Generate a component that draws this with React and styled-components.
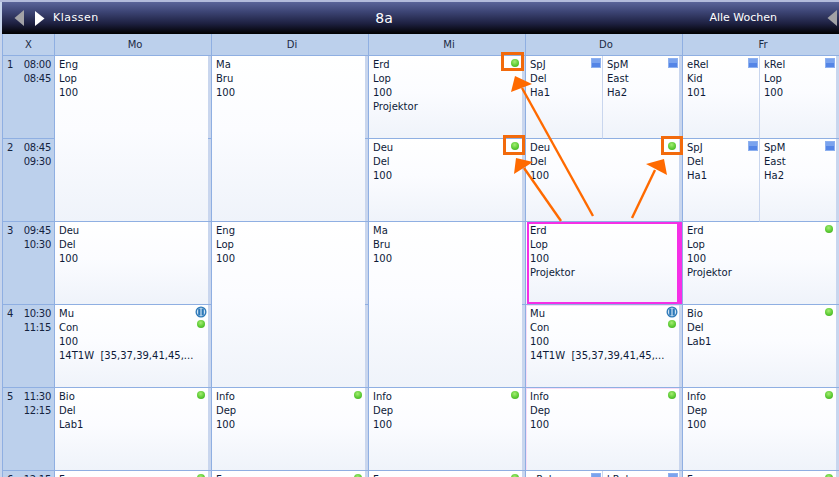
import React from 'react';
import styled, { createGlobalStyle } from 'styled-components';

const LINE = '#8fafe2';
const HEAD = '#bcd0ec';

const Global = createGlobalStyle`
  html, body { margin: 0; padding: 0; background: #fff; }
`;

const Page = styled.div`
  position: relative;
  width: 839px;
  height: 477px;
  overflow: hidden;
  box-sizing: border-box;
  padding: 2px 0 0 2px;
  background: linear-gradient(#b3bbdb 0 2px, #c8d5ec 2px);
  font-family: "DejaVu Sans", Tahoma, sans-serif;
  font-size: 10px;
  line-height: 14px;
  color: #0d1a38;
`;

const TopBar = styled.div`
  width: 840px;
  height: 32px;
  display: grid;
  grid-template-columns: 312px 140px 1fr;
  align-items: center;
  background: linear-gradient(#5a6499 0, #3d4575 30%, #1d2040 68%, #000 100%);
  color: #fff;
`;

const BarLeft = styled.div`
  display: flex;
  align-items: center;
  padding-left: 12px;
`;

const BarLabel = styled.span`
  font-size: 11px;
  letter-spacing: ${({ $spaced }) => ($spaced ? '0.5px' : '0')};
`;

const BarTitle = styled.div`
  text-align: center;
  font-size: 14px;
`;

const BarRight = styled.div`
  display: flex;
  align-items: center;
  justify-content: flex-end;
  padding-right: 4px;
  gap: 50px;
`;

const Arrow = styled.svg`
  display: block;
  flex: none;
  width: 11px;
  height: 17px;
  margin-right: ${({ $after }) => $after || 0}px;
`;

const HeadRow = styled.div`
  display: flex;
  height: 22px;
`;

const HeadCell = styled.div`
  flex: none;
  box-sizing: border-box;
  width: ${({ $w }) => $w}px;
  padding-left: ${({ $w }) => ($w > 100 ? 4 : 0)}px;
  background: ${HEAD};
  border-right: 1px solid ${LINE};
  border-bottom: 1px solid ${LINE};
  border-left: ${({ $first }) => ($first ? `1px solid ${LINE}` : '0')};
  text-align: center;
  line-height: 21px;
  color: #1b2a44;
`;

const Body = styled.div`
  display: flex;
`;

const TimeColumn = styled.div`
  flex: none;
  width: 53px;
  box-sizing: border-box;
  background: ${HEAD};
  border-left: 1px solid ${LINE};
  border-right: 1px solid ${LINE};
`;

const TimeRow = styled.div`
  box-sizing: border-box;
  height: 83px;
  display: flex;
  justify-content: space-between;
  padding: 2px 3px 0 4px;
  border-bottom: 1px solid ${LINE};
  color: #14233f;
`;

const Times = styled.div`
  text-align: right;
  letter-spacing: -0.3px;
`;

const DayColumn = styled.div`
  flex: none;
  width: 157px;
  box-sizing: border-box;
  border-right: 1px solid ${LINE};
`;

const Slot = styled.div`
  position: relative;
  display: flex;
  height: ${({ $span }) => $span * 83}px;
`;

const Strip = styled.div`
  flex: none;
  width: 3px;
  background: repeating-linear-gradient(
    ${({ $selected }) => ($selected ? '#f52fe6' : '#c9d6ee')} 0 82px,
    ${LINE} 82px 83px
  );
`;

const Lesson = styled.div`
  position: relative;
  flex: 1;
  min-width: 0;
  box-sizing: border-box;
  padding: 2px 0 0 4px;
  white-space: pre;
  background: linear-gradient(#fff, #fbfcff 45%, #eff3fa);
  border-bottom: 1px solid ${LINE};
  border-left: ${({ $split }) => ($split ? '1px solid #c9d6ee' : '0')};
  box-shadow: ${({ $tinted }) => ($tinted ? 'inset 1px 1px 0 #f8dcf6' : 'none')};
`;

const SelectionBox = styled.div`
  position: absolute;
  top: 0;
  left: 1px;
  right: 0;
  bottom: 0;
  border: 2px solid #f52fe6;
`;

const Dot = styled.span`
  position: absolute;
  top: ${({ $low }) => ($low ? 15 : 3)}px;
  right: 3px;
  width: 8px;
  height: 8px;
  border-radius: 50%;
  background: radial-gradient(circle at 45% 35%, #a4ec72 0, #5ccb34 55%, #3a9f1c 100%);
`;

const Square = styled.span`
  position: absolute;
  top: 2px;
  right: 1px;
  width: 10px;
  height: 10px;
  box-sizing: border-box;
  border: 1px solid #8db0ef;
  background: linear-gradient(#7aa3ee 0 45%, #5485e6 45%);
`;

const PauseIcon = styled.svg`
  position: absolute;
  top: 1px;
  right: 1px;
  width: 12px;
  height: 12px;
`;

const Marker = styled.rect`
  fill: none;
  stroke: #f26a0c;
  stroke-width: 3;
`;

const Overlay = styled.svg`
  position: absolute;
  top: 0;
  left: 0;
  width: 839px;
  height: 477px;
  pointer-events: none;
`;

const Pause = () => (
  <PauseIcon viewBox="0 0 12 12">
    <circle cx="6" cy="6" r="5.5" fill="#2c78b8" />
    <circle cx="6" cy="6" r="4.2" fill="#cfe3f4" />
    <rect x="3.2" y="2.5" width="2.2" height="7" fill="#2c78b8" />
    <rect x="6.6" y="2.5" width="2.2" height="7" fill="#2c78b8" />
  </PauseIcon>
);

const periods = [
  ['1', '08:00', '08:45'],
  ['2', '08:45', '09:30'],
  ['3', '09:45', '10:30'],
  ['4', '10:30', '11:15'],
  ['5', '11:30', '12:15'],
  ['6', '12:15', '13:00'],
];

const erd = 'Erd\nLop\n100\nProjektor';
const mu = 'Mu\nCon\n100\n14T1W  [35,37,39,41,45,...';
const info = 'Info\nDep\n100';
const bio = 'Bio\nDel\nLab1';
const fra = 'Fra\nDel\n100';

const days = [
  {
    name: 'Mo',
    slots: [
      { text: 'Eng\nLop\n100', span: 2 },
      { text: 'Deu\nDel\n100' },
      { text: mu, pause: true },
      { text: bio, dot: true },
      { text: fra, dot: true },
    ],
  },
  {
    name: 'Di',
    slots: [
      { text: 'Ma\nBru\n100', span: 2 },
      { text: 'Eng\nLop\n100', span: 2 },
      { text: info, dot: true },
      { text: fra, dot: true },
    ],
  },
  {
    name: 'Mi',
    slots: [
      { text: erd, dot: true },
      { text: 'Deu\nDel\n100', dot: true },
      { text: 'Ma\nBru\n100', span: 2 },
      { text: info, dot: true },
      { text: fra, dot: true },
    ],
  },
  {
    name: 'Do',
    slots: [
      { split: ['SpJ\nDel\nHa1', 'SpM\nEast\nHa2'] },
      { text: 'Deu\nDel\n100', dot: true },
      { text: erd, selected: true },
      { text: mu, pause: true, tinted: true },
      { text: info, dot: true, tinted: true },
      { split: ['eRel\nKid\n101', 'kRel\nLop\n100'] },
    ],
  },
  {
    name: 'Fr',
    slots: [
      { split: ['eRel\nKid\n101', 'kRel\nLop\n100'] },
      { split: ['SpJ\nDel\nHa1', 'SpM\nEast\nHa2'] },
      { text: erd, dot: true },
      { text: bio, dot: true },
      { text: info, dot: true },
      { text: fra, dot: true },
    ],
  },
];

const DaySlot = ({ slot }) => (
  <Slot $span={slot.span || 1}>
    {slot.split ? (
      slot.split.map((text, i) => (
        <Lesson key={text} $split={i > 0}>
          {text}
          <Square />
        </Lesson>
      ))
    ) : (
      <Lesson $tinted={slot.tinted}>
        {slot.text}
        {slot.selected && <SelectionBox />}
        {slot.pause && <Pause />}
        {(slot.dot || slot.pause) && <Dot $low={slot.pause} />}
      </Lesson>
    )}
    <Strip $selected={slot.selected} />
  </Slot>
);

const App = () => (
  <Page>
    <Global />
    <TopBar>
      <BarLeft>
        <Arrow $after={9} viewBox="0 0 11 17">
          <polygon points="10,0 10,16 0.5,8" fill="#a2a2a6" />
        </Arrow>
        <Arrow $after={8} viewBox="0 0 11 17">
          <polygon points="1,1 1,16 10.5,8.5" fill="#fff" />
        </Arrow>
        <BarLabel $spaced>Klassen</BarLabel>
      </BarLeft>
      <BarTitle>8a</BarTitle>
      <BarRight>
        <BarLabel>Alle Wochen</BarLabel>
        <Arrow viewBox="0 0 11 17">
          <polygon points="10,0 10,16 0.5,8" fill="#a2a2a6" />
        </Arrow>
      </BarRight>
    </TopBar>
    <HeadRow>
      <HeadCell $w={53} $first>X</HeadCell>
      {days.map((d) => (
        <HeadCell key={d.name} $w={157}>{d.name}</HeadCell>
      ))}
    </HeadRow>
    <Body>
      <TimeColumn>
        {periods.map(([n, from, to]) => (
          <TimeRow key={n}>
            <span>{n}</span>
            <Times>{from}<br />{to}</Times>
          </TimeRow>
        ))}
      </TimeColumn>
      {days.map((d) => (
        <DayColumn key={d.name}>
          {d.slots.map((s, i) => (
            <DaySlot key={i} slot={s} />
          ))}
        </DayColumn>
      ))}
    </Body>
    <Overlay viewBox="0 0 839 477">
      <Marker x="502.5" y="53.5" width="20" height="16" />
      <Marker x="504.5" y="136.5" width="19" height="17" />
      <Marker x="662.5" y="137.5" width="19" height="16" />
      <g stroke="#ff6a00" strokeWidth="2.4" fill="none">
        <line x1="593" y1="216" x2="522" y2="88" />
        <line x1="561" y1="221" x2="524" y2="168" />
        <line x1="632" y1="218" x2="655" y2="170" />
      </g>
      <g fill="#ff6a00">
        <polygon points="515,76 532,84 511,92" />
        <polygon points="516,158 533,162 514,174" />
        <polygon points="664,159 646,164 667,175" />
      </g>
    </Overlay>
  </Page>
);

export default App;
